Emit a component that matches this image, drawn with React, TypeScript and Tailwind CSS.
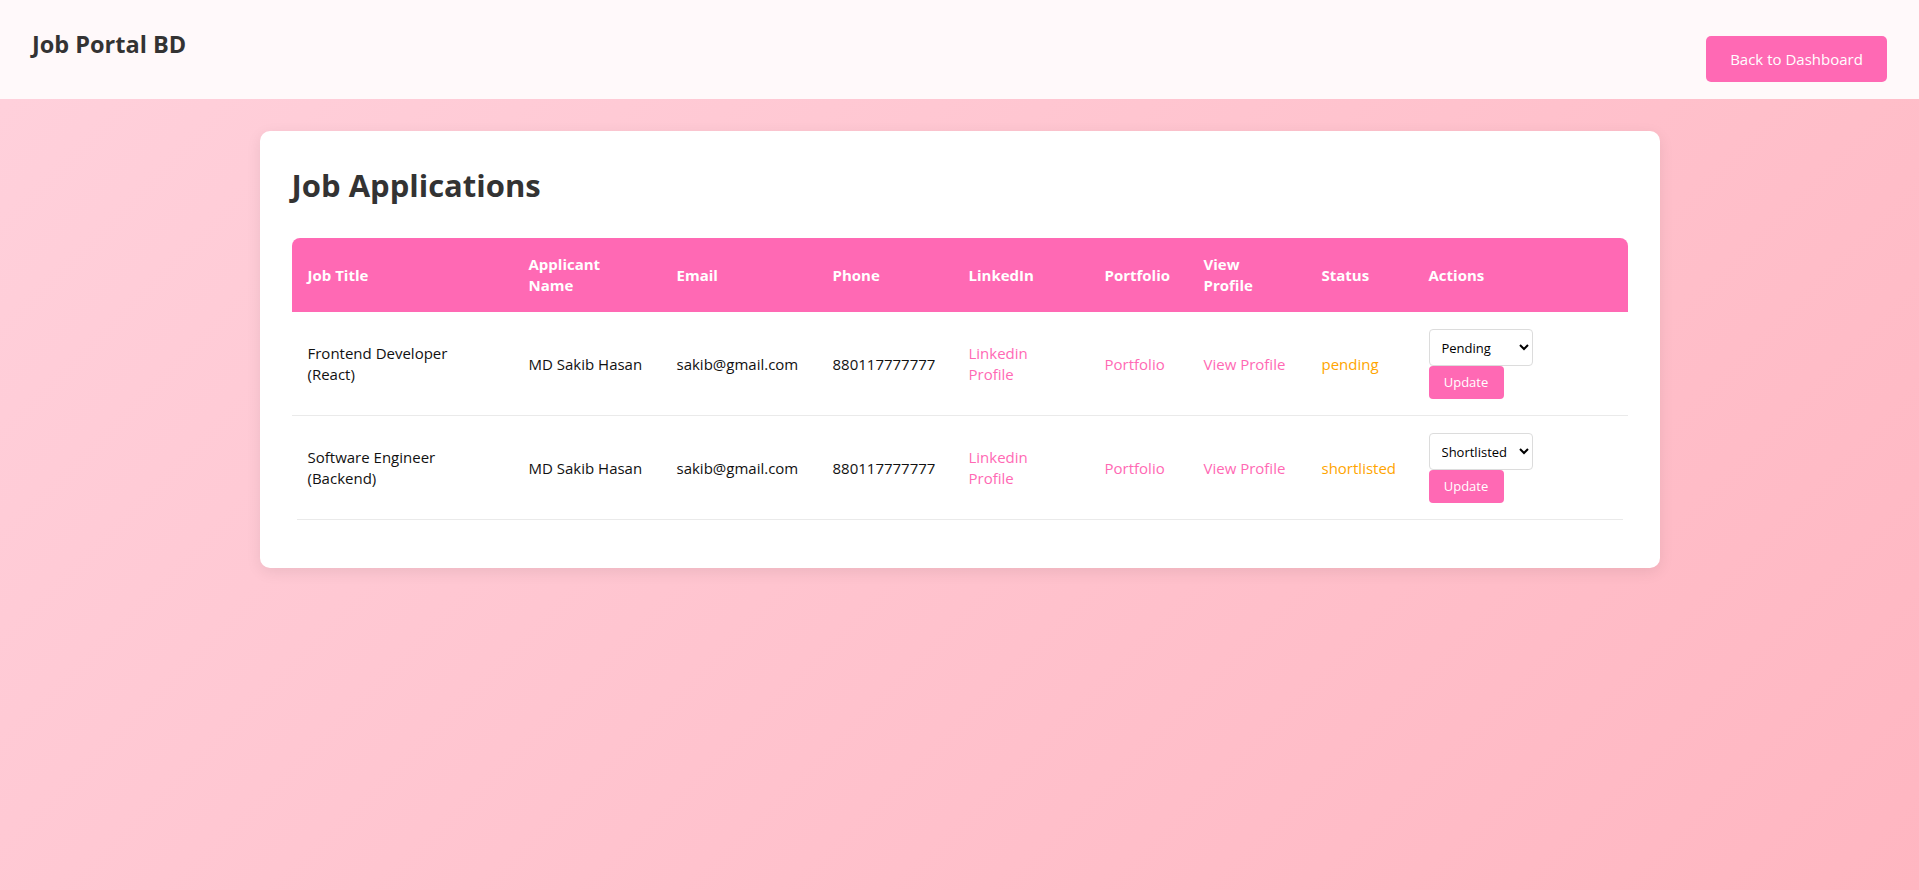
import { useState } from 'react'

type Application = {
  id: number
  jobTitle: string
  applicant: string
  email: string
  phone: string
  status: string
}

const applications: Application[] = [
  {
    id: 1,
    jobTitle: 'Frontend Developer (React)',
    applicant: 'MD Sakib Hasan',
    email: 'sakib@gmail.com',
    phone: '880117777777',
    status: 'pending',
  },
  {
    id: 2,
    jobTitle: 'Software Engineer (Backend)',
    applicant: 'MD Sakib Hasan',
    email: 'sakib@gmail.com',
    phone: '880117777777',
    status: 'shortlisted',
  },
]

const statusOptions = ['Pending', 'Shortlisted', 'Rejected', 'Hired']

function ActionsCell({ initial }: { initial: string }) {
  const [value, setValue] = useState(initial)

  return (
    <div className="flex flex-col items-start">
      <select
        value={value}
        onChange={(e) => setValue(e.target.value)}
        className="h-[37px] w-[104px] rounded-[4px] border border-[#dcdcdc] bg-white px-[8px] text-[13px] text-black"
      >
        {statusOptions.map((opt) => (
          <option key={opt} value={opt}>
            {opt}
          </option>
        ))}
      </select>
      <button className="h-[33px] w-[75px] rounded-[4px] bg-[#ff69b4] text-[13px] text-white">
        Update
      </button>
    </div>
  )
}

export default function App() {
  const headers = [
    'Job Title',
    'Applicant Name',
    'Email',
    'Phone',
    'LinkedIn',
    'Portfolio',
    'View Profile',
    'Status',
    'Actions',
  ]

  return (
    <div className="min-h-screen bg-[linear-gradient(135deg,#ffd1dc,#ffb6c1)] font-['Open_Sans',sans-serif] text-[#333]">
      {/* Top bar */}
      <header className="flex h-[99px] items-start justify-between bg-[#fff9fa] px-[32px]">
        <h1 className="pt-[28px] text-[23.5px] font-bold leading-[32px] text-[#333]">
          Job Portal BD
        </h1>
        <button className="mt-[36px] h-[46px] w-[181px] rounded-[5px] bg-[#ff69b4] text-[15px] text-white">
          Back to Dashboard
        </button>
      </header>

      {/* Applications card */}
      <main className="pt-[32px]">
        <div className="mx-auto w-[1400px] rounded-[10px] bg-white px-[32px] pt-[32px] pb-[48px] shadow-[0_4px_15px_rgba(0,0,0,0.08)]">
          <h2 className="mb-[31px] text-[31px] font-bold leading-[44px] text-[#333]">
            Job Applications
          </h2>

          <table className="w-full table-fixed border-collapse text-left">
            <colgroup>
              <col className="w-[221px]" />
              <col className="w-[148px]" />
              <col className="w-[156px]" />
              <col className="w-[136px]" />
              <col className="w-[136px]" />
              <col className="w-[99px]" />
              <col className="w-[118px]" />
              <col className="w-[107px]" />
              <col />
            </colgroup>
            <thead>
              <tr className="bg-[#ff69b4] text-white">
                {headers.map((h, i) => (
                  <th
                    key={h}
                    className={`px-[16px] py-[16px] align-middle text-[15px] font-bold leading-[21px] ${
                      i === 0 ? 'rounded-tl-[8px]' : ''
                    } ${i === headers.length - 1 ? 'rounded-tr-[8px]' : ''}`}
                  >
                    {h === 'Applicant Name' ? (
                      <>
                        Applicant
                        <br />
                        Name
                      </>
                    ) : h === 'View Profile' ? (
                      <>
                        View
                        <br />
                        Profile
                      </>
                    ) : (
                      h
                    )}
                  </th>
                ))}
              </tr>
            </thead>
            <tbody className="text-[15px] leading-[21px] text-[#111]">
              {applications.map((app, idx) => (
                <tr
                  key={app.id}
                  className={idx === 0 ? 'border-b border-[#eaeaea]' : ''}
                >
                  <td className="px-[16px] pt-[17px] pb-[16px] align-middle">
                    {app.jobTitle.replace(/ \(.*$/, '')}
                    <br />
                    {app.jobTitle.match(/\(.*\)/)?.[0]}
                  </td>
                  <td className="whitespace-nowrap px-[16px] pt-[17px] pb-[16px] align-middle">
                    {app.applicant}
                  </td>
                  <td className="whitespace-nowrap px-[16px] pt-[17px] pb-[16px] align-middle">
                    {app.email}
                  </td>
                  <td className="whitespace-nowrap px-[16px] pt-[17px] pb-[16px] align-middle">
                    {app.phone}
                  </td>
                  <td className="px-[16px] pt-[17px] pb-[16px] align-middle">
                    <a href="#" className="text-[#ff69b4]">
                      Linkedin
                      <br />
                      Profile
                    </a>
                  </td>
                  <td className="whitespace-nowrap px-[16px] pt-[17px] pb-[16px] align-middle">
                    <a href="#" className="text-[#ff69b4]">
                      Portfolio
                    </a>
                  </td>
                  <td className="whitespace-nowrap px-[16px] pt-[17px] pb-[16px] align-middle">
                    <a href="#" className="text-[#ff69b4]">
                      View Profile
                    </a>
                  </td>
                  <td className="whitespace-nowrap px-[16px] pt-[17px] pb-[16px] align-middle text-[#ffa500]">
                    {app.status}
                  </td>
                  <td className="px-[16px] pt-[17px] pb-[16px] align-middle">
                    <ActionsCell
                      initial={app.status === 'pending' ? 'Pending' : 'Shortlisted'}
                    />
                  </td>
                </tr>
              ))}
            </tbody>
          </table>
          <div className="mx-[5px] h-px bg-[#eaeaea]" />
        </div>
      </main>
    </div>
  )
}
